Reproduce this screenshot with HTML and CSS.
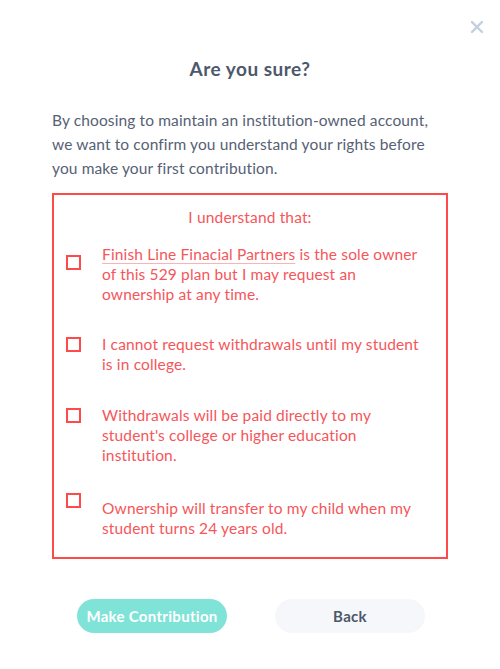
FILE: index.html
```html
<!DOCTYPE html>
<html>
<head>
<meta charset="utf-8">
<link rel="stylesheet" href="styles.css">
</head>
<body>
<div class="modal">
  <button class="close" aria-label="Close">
    <svg width="12" height="12" viewBox="0 0 12 12"><path d="M1 1L11 11M11 1L1 11" stroke="#c3d0df" stroke-width="2.4" stroke-linecap="square"/></svg>
  </button>
  <h1 class="title">Are you sure?</h1>
  <p class="intro">By choosing to maintain an institution-owned account, we want to confirm you understand your rights before you make your first contribution.</p>
  <div class="terms">
    <div class="terms-head">I understand that:</div>
    <label class="item item-1">
      <span class="box box-low"></span>
      <span class="text"><span class="link">Finish Line Finacial Partners</span> is the sole owner of this 529 plan but I may request an ownership at any time.</span>
    </label>
    <label class="item item-2">
      <span class="box"></span>
      <span class="text">I cannot request withdrawals until my student is in college.</span>
    </label>
    <label class="item item-3">
      <span class="box"></span>
      <span class="text">Withdrawals will be paid directly to my student's college or higher education institution.</span>
    </label>
    <label class="item item-4">
      <span class="box"></span>
      <span class="text text-low">Ownership will transfer to my child when my student turns 24 years old.</span>
    </label>
  </div>
  <div class="actions">
    <button class="btn btn-primary">Make Contribution</button>
    <button class="btn btn-secondary">Back</button>
  </div>
</div>
</body>
</html>
```
FILE: styles.css
```css
* { box-sizing: border-box; }
html, body { margin: 0; padding: 0; background: #fff; }
body { font-family: Lato, "Open Sans", sans-serif; }
.modal {
  position: relative;
  width: 500px;
  height: 669px;
  padding: 55px 52px 0;
}
.close {
  position: absolute;
  top: 21px;
  right: 17px;
  border: 0;
  background: none;
  padding: 0;
  width: 12px;
  height: 12px;
  display: flex;
}
.title {
  margin: 0;
  text-align: center;
  font-size: 19px;
  line-height: 28px;
  font-weight: 700;
  letter-spacing: 0.5px;
  color: #4d586c;
}
.intro {
  margin: 25px 0 0;
  padding-right: 8px;
  font-size: 15.5px;
  line-height: 24px;
  letter-spacing: 0.12px;
  color: #566175;
}
.terms {
  margin-top: 13px;
  border: 2px solid #ff4a4a;
  padding: 12px 22px 19px 12px;
  color: #f5565b;
  font-size: 15.5px;
  line-height: 20px;
  letter-spacing: 0.15px;
}
.terms-head {
  text-align: center;
  padding-left: 10px;
}
.item {
  display: flex;
  align-items: flex-start;
  gap: 21px;
}
.item-1 { margin-top: 17px; }
.item-2 { margin-top: 30px; }
.item-3 { margin-top: 31px; }
.item-4 { margin-top: 25px; }
.box {
  flex: none;
  width: 15px;
  height: 15px;
  border: 2px solid #ff4a4a;
  margin-top: 3px;
}
.box-low { margin-top: 11px; }
.text { flex: 1; }
.text-low { padding-top: 8px; }
.link {
  text-decoration: underline;
  text-decoration-color: #f9b5b5;
  text-decoration-thickness: 1px;
  text-underline-offset: 3px;
}
.actions {
  margin-top: 40px;
  display: flex;
  justify-content: space-between;
  padding: 0 23px 0 25px;
}
.btn {
  width: 150px;
  height: 34px;
  border: 0;
  border-radius: 17px;
  font-family: Lato, "Open Sans", sans-serif;
  font-size: 15px;
  font-weight: 700;
  letter-spacing: 0.3px;
}
.btn-primary { background: #80e3d7; color: #fff; }
.btn-secondary { background: #f5f7fa; color: #4d586c; }
```
